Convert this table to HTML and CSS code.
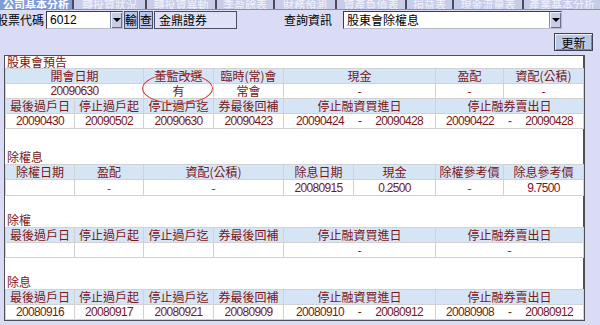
FILE: index.html
```html
<!DOCTYPE html>
<html lang="zh-Hant">
<head>
<meta charset="utf-8">
<title>股東會除權息</title>
<link rel="stylesheet" href="styles.css">
</head>
<body>
<div class="tabs">
  <div class="tab t1 active"><span>公司基本分析</span></div>
  <div class="tab t2"><span>轉投資狀況</span></div>
  <div class="tab t3"><span>轉投資異動</span></div>
  <div class="tab t4"><span>季盈餘表</span></div>
  <div class="tab t5"><span>財務預測</span></div>
  <div class="tab t6"><span>資產負債表</span></div>
  <div class="tab t7"><span>損益表</span></div>
  <div class="tab t8"><span>現金流量表</span></div>
  <div class="tab t9"><span>產業基本分析</span></div>
</div>

<div class="toolbar">
  <span class="lbl lbl-code">股票代碼</span>
  <div class="select sel-code"><span class="val">6012</span><span class="drop"><i></i></span></div>
  <button class="mini">輸</button>
  <button class="mini">查</button>
  <div class="namebox">金鼎證券</div>
  <span class="lbl lbl-query">查詢資訊</span>
  <div class="select sel-query"><span class="val">股東會除權息</span><span class="drop"><i></i></span></div>
</div>

<div class="actions">
  <button class="refresh">更新</button>
</div>

<div class="panel">
  <div class="ttl first">股東會預告</div>
  <table class="grid">
    <colgroup><col class="c1"><col class="c2"><col class="c3"><col class="c4"><col class="c5"><col class="c6"><col class="c7"><col class="c8"></colgroup>
    <tr class="hd"><td colspan="2">開會日期</td><td>董監改選</td><td>臨時(常)會</td><td colspan="2">現金</td><td>盈配</td><td>資配(公積)</td></tr>
    <tr><td colspan="2" class="n">20090630</td><td>有</td><td>常會</td><td colspan="2">-</td><td>-</td><td>-</td></tr>
    <tr class="hd"><td>最後過戶日</td><td>停止過戶起</td><td>停止過戶迄</td><td>券最後回補</td><td colspan="2">停止融資買進日</td><td colspan="2">停止融券賣出日</td></tr>
    <tr><td class="n">20090430</td><td class="n">20090502</td><td class="n">20090630</td><td class="n">20090423</td><td colspan="2" class="n"><span class="rng">20090424<i>-</i>20090428</span></td><td colspan="2" class="n"><span class="rng">20090422<i>-</i>20090428</span></td></tr>
  </table>

  <div class="ttl sec2">除權息</div>
  <table class="grid">
    <colgroup><col class="c1"><col class="c2"><col class="c3"><col class="c4"><col class="c5"><col class="c6"><col class="c7"><col class="c8"></colgroup>
    <tr class="hd"><td>除權日期</td><td>盈配</td><td colspan="2">資配(公積)</td><td>除息日期</td><td>現金</td><td>除權參考價</td><td>除息參考價</td></tr>
    <tr class="tall"><td></td><td>-</td><td colspan="2">-</td><td class="n">20080915</td><td class="n">0.2500</td><td>-</td><td class="n">9.7500</td></tr>
  </table>

  <div class="ttl">除權</div>
  <table class="grid">
    <colgroup><col class="c1"><col class="c2"><col class="c3"><col class="c4"><col class="c5"><col class="c6"><col class="c7"><col class="c8"></colgroup>
    <tr class="hd"><td>最後過戶日</td><td>停止過戶起</td><td>停止過戶迄</td><td>券最後回補</td><td colspan="2">停止融資買進日</td><td colspan="2">停止融券賣出日</td></tr>
    <tr><td></td><td></td><td></td><td></td><td colspan="2">-</td><td colspan="2">-</td></tr>
  </table>

  <div class="ttl">除息</div>
  <table class="grid">
    <colgroup><col class="c1"><col class="c2"><col class="c3"><col class="c4"><col class="c5"><col class="c6"><col class="c7"><col class="c8"></colgroup>
    <tr class="hd"><td>最後過戶日</td><td>停止過戶起</td><td>停止過戶迄</td><td>券最後回補</td><td colspan="2">停止融資買進日</td><td colspan="2">停止融券賣出日</td></tr>
    <tr><td class="n">20080916</td><td class="n">20080917</td><td class="n">20080921</td><td class="n">20080909</td><td colspan="2" class="n"><span class="rng">20080910<i>-</i>20080912</span></td><td colspan="2" class="n"><span class="rng">20080908<i>-</i>20080912</span></td></tr>
  </table>

  <div class="mark"></div>
</div>
</body>
</html>
```
FILE: styles.css
```css
* { box-sizing: border-box; }
html, body { margin: 0; padding: 0; }
body {
  width: 600px;
  height: 325px;
  overflow: hidden;
  background: #d9dcf4;
  font-family: "Noto Sans CJK TC", "Noto Sans CJK SC", sans-serif;
  font-size: 12px;
  color: #000;
}

/* tabs */
.tabs {
  display: flex;
  height: 10px;
  overflow: hidden;
  background: #c7cce9;
  border-bottom: 1px solid #8a8fae;
}
.tab {
  height: 9px;
  overflow: hidden;
  border-right: 2px solid #4a4a5a;
  color: #f2f3fb;
  font-size: 11px;
  line-height: 12px;
  text-align: center;
  white-space: nowrap;
}
.tab span { display: block; margin-top: -2px; }
.tab.active { background: #7d9bd6; color: #fff; font-weight: bold; }
.t1 { width: 74px; }
.t2 { width: 73px; }
.t3 { width: 70px; }
.t4 { width: 58px; }
.t5 { width: 62px; }
.t6 { width: 70px; }
.t7 { width: 47px; }
.t8 { width: 70px; }
.t9 { flex: 1; border-right: 0; }

/* toolbar */
.toolbar {
  display: flex;
  align-items: center;
  height: 19px;
  white-space: nowrap;
}
.lbl { font-size: 12px; line-height: 18px; }
.lbl-code { margin-left: -4px; width: 50px; }
.lbl-query { margin-left: 47px; width: 59px; }
.select {
  display: flex;
  height: 18px;
  background: #fff;
  border: 1px solid #3c3c48;
  border-right-color: #b8bccc;
  border-bottom-color: #b8bccc;
}
.select .val { flex: 1; padding-left: 3px; line-height: 16px; }
.sel-code { width: 77px; }
.sel-code .val { font-family: "Liberation Sans", sans-serif; font-size: 12px; }
.sel-query { width: 219px; }
.select .drop {
  width: 12px;
  background: #c6cde9;
  border-left: 1px solid #8088a8;
  box-shadow: inset 1px 1px #eef0fa, inset -1px -1px #6a708c;
  display: flex;
  align-items: center;
  justify-content: center;
}
.select .drop i {
  width: 0; height: 0;
  border-left: 4px solid transparent;
  border-right: 4px solid transparent;
  border-top: 4px solid #000;
}
.mini {
  width: 14px;
  height: 18px;
  margin: 0 0 0 1px;
  padding: 0;
  font: inherit;
  font-size: 12px;
  line-height: 16px;
  background: #b7c6e8;
  border: 1px solid #4a4e66;
  color: #000;
}
.namebox {
  width: 83px;
  height: 18px;
  margin-left: 1px;
  padding-left: 4px;
  line-height: 16px;
  background: #dfe2f6;
  border: 1px solid #4a4e66;
}

/* actions */
.actions {
  display: flex;
  justify-content: flex-end;
  padding: 4px 7px 4px 0;
}
.refresh {
  width: 39px;
  height: 18px;
  padding: 0;
  font: inherit;
  font-size: 12px;
  line-height: 15px;
  color: #000;
  background: #b9c8e6;
  border: 1px solid #3f4256;
  box-shadow: inset 1px 1px #eef2fb, inset -1px -1px #7c88a8;
}

/* panel */
.panel {
  position: relative;
  margin-left: 4px;
  width: 581px;
  height: 266px;
  background: #fff;
  border-top: 1px solid #505058;
  border-left: 1px solid #505058;
  border-right: 2px solid #505058;
  border-bottom: 2px solid #505058;
  color: #7a1616;
}
.ttl {
  height: 15px;
  line-height: 15px;
  padding-left: 2px;
  margin-top: 16px;
}
.ttl.first { margin-top: 0; height: 12px; line-height: 12px; }
.ttl.sec2 { margin-top: 20px; }

.grid {
  width: 578px;
  table-layout: fixed;
  border-collapse: collapse;
}
.c1 { width: 69px; }
.c2 { width: 69px; }
.c3 { width: 70px; }
.c4 { width: 70px; }
.c5 { width: 70px; }
.c6 { width: 82px; }
.c7 { width: 68px; }
.c8 { width: 80px; }
.grid td {
  height: 15px;
  padding: 0;
  line-height: 14px;
  text-align: center;
  white-space: nowrap;
  overflow: hidden;
  border: 1px solid #d2d2d2;
}
.grid tr.hd td { background: #d6e5f6; }
.grid tr.tall td { height: 16px; }
.grid td.n {
  font-family: "Liberation Sans", "Noto Sans CJK TC", sans-serif;
  font-size: 12px;
  letter-spacing: -0.7px;
}
.rng i { font-style: normal; margin: 0 14px; }

.mark {
  position: absolute;
  left: 137px;
  top: 17px;
  width: 71px;
  height: 31px;
  border: 1px solid #e23a3a;
  border-radius: 50%;
  pointer-events: none;
}
```
